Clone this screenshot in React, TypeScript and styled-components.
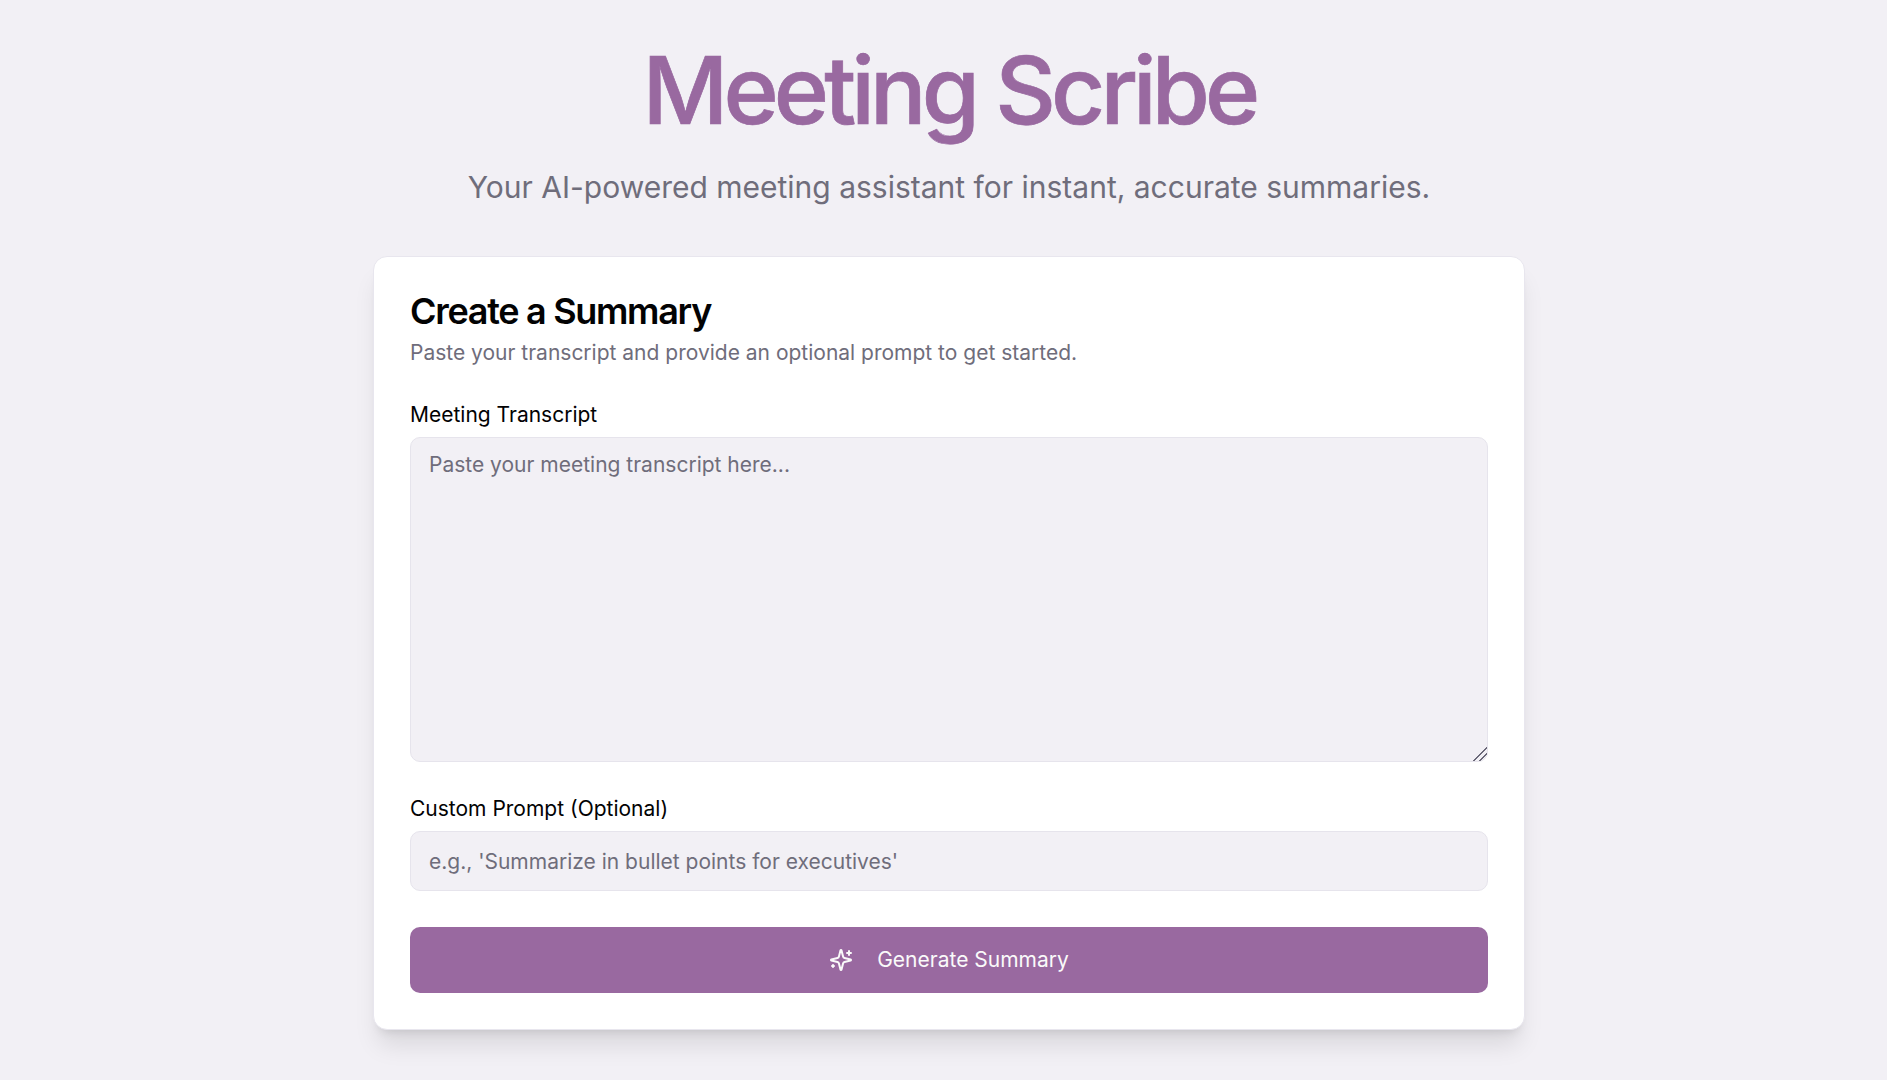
import React from "react";
import styled, { createGlobalStyle } from "styled-components";

const Global = createGlobalStyle`
  * { box-sizing: border-box; }
  html, body { margin: 0; padding: 0; }
  body { background: #f2f0f5; font-family: Inter, "Liberation Sans", sans-serif; color: #09090b; }
`;
const Page = styled.main`
  min-height: 1080px;
  display: flex;
  flex-direction: column;
  align-items: center;
  padding: 34px 0 0 11px;
`;
const Header = styled.header`
  text-align: center;
  margin-bottom: 51px;
`;
const Title = styled.h1`
  margin: 0;
  font-size: 94px;
  line-height: 1.2;
  font-weight: 500;
  letter-spacing: -0.052em;
  -webkit-text-stroke: 0.7px #9969a0;
  color: #9969a0;
`;
const Subtitle = styled.p`
  margin: 22px 0 0;
  font-size: 30px;
  line-height: 36px;
  color: #6f6d7b;
`;
const Card = styled.section`
  width: 1152px;
  background: #fff;
  border: 1px solid #e8e6ee;
  border-radius: 14px;
  padding: 36px;
  display: flex;
  flex-direction: column;
  box-shadow: 0 20px 25px -5px rgba(0, 0, 0, 0.1), 0 8px 10px -6px rgba(0, 0, 0, 0.1);
`;
const CardTitle = styled.h2`
  margin: 0;
  font-size: 36px;
  line-height: 36px;
  font-weight: 600;
  letter-spacing: -0.036em;
  color: #020203;
`;
const CardText = styled.p`
  margin: 8px 0 0;
  font-size: 21px;
  line-height: 31px;
  color: #6f6d7b;
`;
const Field = styled.label`
  display: flex;
  flex-direction: column;
  gap: 8px;
  margin-top: 33px;
  font-size: 21px;
  line-height: 28px;
  font-weight: 400;
  color: #020203;
`;
const TextArea = styled.textarea`
  display: block;
  width: 100%;
  height: 325px;
  padding: 12px 18px;
  font: 400 21px/30px Inter, "Liberation Sans", sans-serif;
  color: #020203;
  background: #f2f0f5;
  border: 1px solid #e6e4ec;
  border-radius: 10px;
  outline: none;
  resize: vertical;
  &::placeholder { color: #6f6d7b; opacity: 1; }
  &::-webkit-resizer {
    background: linear-gradient(
      135deg,
      transparent 11px,
      #6a6878 11px,
      #6a6878 12.4px,
      transparent 12.4px,
      transparent 15.2px,
      #6a6878 15.2px,
      #6a6878 16.6px,
      transparent 16.6px
    );
  }
`;
const Input = styled.input`
  display: block;
  width: 100%;
  height: 60px;
  padding: 2px 18px 0;
  font: 400 21px/28px Inter, "Liberation Sans", sans-serif;
  color: #020203;
  background: #f2f0f5;
  border: 1px solid #e6e4ec;
  border-radius: 10px;
  outline: none;
  &::placeholder { color: #6f6d7b; opacity: 1; }
`;
const Button = styled.button`
  display: flex;
  align-items: center;
  justify-content: center;
  gap: 24px;
  width: 100%;
  height: 66px;
  margin-top: 36px;
  border: 0;
  border-radius: 10px;
  background: #9969a0;
  color: #fafafa;
  font: 400 21px/28px Inter, "Liberation Sans", sans-serif;
  svg { width: 24px; height: 24px; flex: none; }
`;
const Sparkles = () => (
  <svg viewBox="0 0 24 24" fill="none" stroke="currentColor" strokeWidth="2" strokeLinecap="round" strokeLinejoin="round" aria-hidden="true">
    <path d="M9.937 15.5A2 2 0 0 0 8.5 14.063l-6.135-1.582a.5.5 0 0 1 0-.962L8.5 9.936A2 2 0 0 0 9.937 8.5l1.582-6.135a.5.5 0 0 1 .963 0L14.063 8.5A2 2 0 0 0 15.5 9.937l6.135 1.581a.5.5 0 0 1 0 .964L15.5 14.063a2 2 0 0 0-1.437 1.437l-1.582 6.135a.5.5 0 0 1-.963 0z" />
    <path d="M20 3v4" />
    <path d="M22 5h-4" />
    <path d="M4 17v2" />
    <path d="M5 18H3" />
  </svg>
);

export default function App() {
  return (
    <>
      <Global />
      <Page>
        <Header>
          <Title>Meeting Scribe</Title>
          <Subtitle>Your AI-powered meeting assistant for instant, accurate summaries.</Subtitle>
        </Header>
        <Card>
          <CardTitle>Create a Summary</CardTitle>
          <CardText>Paste your transcript and provide an optional prompt to get started.</CardText>
          <Field>
            Meeting Transcript
            <TextArea placeholder="Paste your meeting transcript here..." />
          </Field>
          <Field>
            Custom Prompt (Optional)
            <Input placeholder="e.g., 'Summarize in bullet points for executives'" />
          </Field>
          <Button type="button">
            <Sparkles />
            Generate Summary
          </Button>
        </Card>
      </Page>
    </>
  );
}
